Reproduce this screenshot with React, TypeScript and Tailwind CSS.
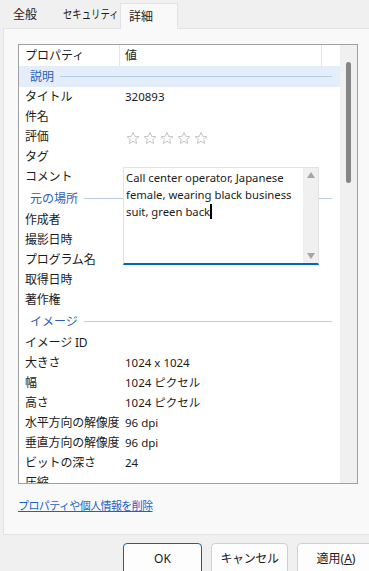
import React from "react";

const font = { fontFamily: '"Noto Sans", "Noto Sans CJK JP", sans-serif' };

function Star() {
  return (
    <svg width="14" height="14" viewBox="0 0 24 24" className="shrink-0">
      <path
        d="M12 2.5l2.9 6.6 7.1.6-5.4 4.7 1.6 7-6.2-3.8-6.2 3.8 1.6-7L2 9.7l7.1-.6z"
        fill="none"
        stroke="#bdbdbd"
        strokeWidth="1.5"
        strokeLinejoin="round"
      />
    </svg>
  );
}

function Group({ label, h }: { label: string; h: string }) {
  return (
    <div className={`flex items-center shrink-0 ${h} pl-[11px] pr-[8px]`}>
      <span className="text-[#2d5db8] leading-none">{label}</span>
      <div className="flex-1 ml-[6px] h-px bg-[#b9cbe6]" />
    </div>
  );
}

function Row({ label, value }: { label: string; value?: React.ReactNode }) {
  return (
    <div className="flex items-center h-[20px] shrink-0">
      <div className="w-[106px] pl-[6px] shrink-0 whitespace-nowrap text-[#1b1b1b] tracking-[-0.2px]">{label}</div>
      <div className="text-[#1b1b1b] whitespace-nowrap text-[11.5px]">{value}</div>
    </div>
  );
}

export default function App() {
  return (
    <div
      className="w-[369px] h-[571px] bg-[#f0f0f0] overflow-hidden text-[12px] text-[#1b1b1b]"
      style={font}
    >
      {/* Tabs */}
      <div className="flex items-end h-[28px] pl-[3px] whitespace-nowrap">
        <div className="w-[52px] h-[26px] pl-[10px] flex items-center">全般</div>
        <div className="w-[65px] h-[26px] pl-[8px] flex items-center overflow-hidden">
          <span className="inline-block origin-left scale-x-[0.78]">セキュリティ</span>
        </div>
        <div className="w-[58px] h-[26px] pl-[8px] flex items-center bg-[#f9f9f9] border-t border-l border-r border-[#e3e3e3] relative -mb-px">
          詳細
        </div>
      </div>

      {/* Panel */}
      <div className="ml-[3px] h-[507px] bg-[#f9f9f9] border-t border-l border-b border-[#e3e3e3] pt-[15px] pl-[14px]">
        {/* List box */}
        <div className="relative w-[340px] h-[440px] border border-[#a0a0a0] bg-white flex overflow-hidden">
          <div className="w-[321px] flex flex-col">
            {/* Header */}
            <div className="flex items-center h-[21px] shrink-0">
              <div className="w-[101px] pl-[6px] h-full flex items-center border-r border-[#e5e5e5]">プロパティ</div>
              <div className="w-[202px] pl-[5px] h-full flex items-center border-r border-[#e5e5e5]">値</div>
            </div>
            <div className="bg-[#e3eefa] shrink-0">
              <Group label="説明" h="h-[21px]" />
            </div>
            <Row label="タイトル" value="320893" />
            <Row label="件名" />
            <Row
              label="評価"
              value={
                <div className="flex gap-[3px] pl-[1px] pt-[2px]">
                  <Star />
                  <Star />
                  <Star />
                  <Star />
                  <Star />
                </div>
              }
            />
            <Row label="タグ" />
            <Row label="コメント" />
            <Group label="元の場所" h="h-[23px]" />
            <Row label="作成者" />
            <Row label="撮影日時" />
            <Row label="プログラム名" />
            <Row label="取得日時" />
            <Row label="著作権" />
            <Group label="イメージ" h="h-[23px]" />
            <Row label="イメージ ID" />
            <Row label="大きさ" value="1024 x 1024" />
            <Row label="幅" value="1024 ピクセル" />
            <Row label="高さ" value="1024 ピクセル" />
            <Row label="水平方向の解像度" value="96 dpi" />
            <Row label="垂直方向の解像度" value="96 dpi" />
            <Row label="ビットの深さ" value="24" />
            <Row label="圧縮" />
          </div>

          {/* List scrollbar */}
          <div className="w-[17px] h-full bg-[#f0f0f0] relative">
            <div className="absolute left-[6px] top-[17px] w-[5px] h-[121px] rounded-full bg-[#858585]" />
          </div>

          {/* Comment editor overlay */}
          <div className="absolute left-[104px] top-[122px] w-[196px] h-[98px] bg-white border border-[#e2e2e2] border-b-2 border-b-[#0067c0] flex">
            <div className="flex-1 pl-[2px] pt-[1px] leading-[17px] whitespace-nowrap text-[11.3px]">
              <div>Call center operator, Japanese</div>
              <div>female, wearing black business</div>
              <div className="flex items-center">
                suit, green back
                <span className="inline-block w-[2px] h-[15px] bg-black" />
              </div>
            </div>
            <div className="w-[15px] bg-[#f0f0f0] flex flex-col items-center justify-between py-[4px]">
              <svg width="8" height="6" viewBox="0 0 8 6">
                <path d="M0 6L4 0L8 6Z" fill="#a6a6a6" />
              </svg>
              <svg width="8" height="6" viewBox="0 0 8 6">
                <path d="M0 0L4 6L8 0Z" fill="#a6a6a6" />
              </svg>
            </div>
          </div>
        </div>

        {/* Link */}
        <div className="mt-[14px] leading-[16px]">
          <span className="text-[#1a62c7] underline text-[11px] tracking-[-0.6px]">プロパティや個人情報を削除</span>
        </div>
      </div>

      {/* Buttons */}
      <div className="flex pl-[123px] pt-[8px] gap-[9px] whitespace-nowrap">
        <div className="w-[79px] h-[32px] shrink-0 bg-[#fdfdfd] border border-[#0067c0] rounded-[4px] flex items-center justify-center">
          OK
        </div>
        <div className="w-[77px] h-[32px] shrink-0 bg-[#fdfdfd] border border-[#d0d0d0] rounded-[4px] flex items-center justify-center tracking-[-0.4px]">
          キャンセル
        </div>
        <div className="w-[78px] h-[32px] shrink-0 bg-[#fdfdfd] border border-[#d0d0d0] rounded-[4px] flex items-center justify-center">
          適用(<span className="underline">A</span>)
        </div>
      </div>
    </div>
  );
}
